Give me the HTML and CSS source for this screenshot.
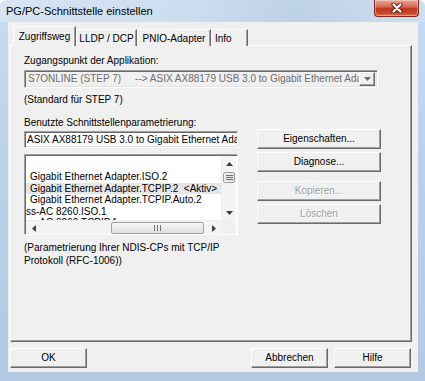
FILE: index.html
```html
<!DOCTYPE html>
<html lang="de">
<head>
<meta charset="utf-8">
<title>PG/PC-Schnittstelle einstellen</title>
<link rel="stylesheet" href="styles.css">
</head>
<body>
<div class="window">
  <div class="titlebar">
    <span class="title">PG/PC-Schnittstelle einstellen</span>
    <div class="close">
      <svg width="14" height="10" viewBox="0 0 14 10"><path d="M3.5 1.5 L10.5 8.5 M10.5 1.5 L3.5 8.5" stroke="#5a2016" stroke-width="4.2" stroke-linecap="round"/><path d="M3.5 1.5 L10.5 8.5 M10.5 1.5 L3.5 8.5" stroke="#ffffff" stroke-width="2.2" stroke-linecap="round"/></svg>
    </div>
  </div>
  <div class="client">
    <div class="tabs">
      <div class="tab active t1">Zugriffsweg</div>
      <div class="tab t2">LLDP / DCP</div>
      <div class="tab t3">PNIO-Adapter</div>
      <div class="tab t4">Info</div>
    </div>
    <div class="panel">
      <div class="label">Zugangspunkt der Applikation:</div>
      <div class="combo">
        <span class="combo-text">S7ONLINE (STEP 7)     --&gt; ASIX AX88179 USB 3.0 to Gigabit Ethernet Adapter</span>
        <span class="combo-btn"><svg width="7" height="4" viewBox="0 0 7 4"><path d="M0 0 H7 L3.5 4 Z" fill="#6d6d6d"/></svg></span>
      </div>
      <div class="label gap-std">(Standard für STEP 7)</div>
      <div class="label gap-ben">Benutzte Schnittstellenparametrierung:</div>
      <div class="cols">
        <div class="leftcol">
          <div class="textbox">ASIX AX88179 USB 3.0 to Gigabit Ethernet Adapter</div>
          <div class="list">
            <div class="items">
              <div class="row ind">Gigabit Ethernet Adapter.ISO.2</div>
              <div class="row ind sel">Gigabit Ethernet Adapter.TCPIP.2&nbsp;&nbsp;&lt;Aktiv&gt;</div>
              <div class="row ind">Gigabit Ethernet Adapter.TCPIP.Auto.2</div>
              <div class="row">ss-AC 8260.ISO.1</div>
              <div class="row">ss-AC 8260.TCPIP.1</div>
            </div>
            <div class="vscroll">
              <span class="sbtn"><svg width="7" height="4" viewBox="0 0 7 4"><path d="M0 4 H7 L3.5 0 Z" fill="#404040"/></svg></span>
              <span class="vthumb"><span class="grip"></span><span class="grip"></span><span class="grip"></span></span>
              <span class="vtrack"></span>
              <span class="sbtn"><svg width="7" height="4" viewBox="0 0 7 4"><path d="M0 0 H7 L3.5 4 Z" fill="#404040"/></svg></span>
            </div>
            <div class="hscroll">
              <span class="sbtn"><svg width="4" height="7" viewBox="0 0 4 7"><path d="M4 0 V7 L0 3.5 Z" fill="#404040"/></svg></span>
              <span class="htrack"><span class="hthumb"><span class="vgrip"></span><span class="vgrip"></span><span class="vgrip"></span></span></span>
              <span class="sbtn"><svg width="4" height="7" viewBox="0 0 4 7"><path d="M0 0 V7 L4 3.5 Z" fill="#404040"/></svg></span>
            </div>
            <div class="corner"></div>
          </div>
        </div>
        <div class="rightcol">
          <div class="btn wide">Eigenschaften...</div>
          <div class="btn wide g3">Diagnose...</div>
          <div class="btn wide disabled g9">Kopieren...</div>
          <div class="btn wide disabled g3">Löschen</div>
        </div>
      </div>
      <div class="note">(Parametrierung Ihrer NDIS-CPs mit TCP/IP<br>Protokoll (RFC-1006))</div>
    </div>
    <div class="footer">
      <div class="btn foot">OK</div>
      <div class="btn foot push">Abbrechen</div>
      <div class="btn foot">Hilfe</div>
    </div>
  </div>
</div>
</body>
</html>
```

FILE: styles.css
```css
* { box-sizing: border-box; }
html, body { margin: 0; padding: 0; background: #ffffff; }
body { font-family: "Liberation Sans", Arial, sans-serif; font-size: 10px; color: #000; }

.window {
  width: 425px;
  height: 381px;
  display: flex;
  flex-direction: column;
  background: linear-gradient(180deg, #cadcf0 0%, #bcd1ea 40%, #b3c9e3 100%);
  border-radius: 6px 6px 0 0;
}

.titlebar {
  height: 22px;
  flex: none;
  display: flex;
  align-items: flex-start;
  background: linear-gradient(90deg, rgba(255,255,255,0.25) 0%, rgba(255,255,255,0.05) 45%, rgba(120,150,185,0.15) 70%, rgba(255,255,255,0.1) 100%);
}
.title {
  padding: 4px 0 0 6px;
  font-size: 11px;
  line-height: 14px;
  color: #000;
}
.close {
  margin-left: auto;
  margin-right: 6px;
  width: 45px;
  height: 17px;
  border: 1px solid #7a2c22;
  border-top: none;
  border-radius: 0 0 4px 4px;
  background: linear-gradient(180deg, #e8a596 0%, #d96d55 40%, #c2341a 55%, #c94a2c 85%, #dc7a58 100%);
  display: flex;
  justify-content: center;
  align-items: center;
  box-shadow: inset 0 0 0 1px rgba(255,255,255,0.35);
}

.client {
  flex: 1;
  margin: 0 7px 9px 8px;
  background: #f0f0f0;
  display: flex;
  flex-direction: column;
}

.tabs {
  display: flex;
  align-items: flex-end;
  height: 20px;
  margin: 4px 0 -1px 5px;
  position: relative;
  z-index: 1;
}
.tab {
  height: 17px;
  line-height: 12px;
  padding-top: 3px;
  text-align: center;
  border-top: 1px solid #ffffff;
  border-left: 1px solid #ffffff;
  border-right: 1px solid #696969;
  box-shadow: inset -1px 0 0 #a0a0a0;
  background: #f0f0f0;
  white-space: nowrap;
}
.tab.active { height: 20px; padding-top: 4px; }
.t1 { width: 63px; }
.t2 { width: 61px; }
.t3 { width: 74px; }
.t4 { width: 37px; text-align: left; padding-left: 3px; }

.panel {
  margin-left: 2px;
  width: 402px;
  height: 297px;
  background: #f0f0f0;
  border-top: 1px solid #ffffff;
  border-left: 1px solid #ffffff;
  border-right: 1px solid #696969;
  border-bottom: 1px solid #696969;
  box-shadow: inset -1px -1px 0 #a0a0a0;
  padding: 9px 0 0 13px;
  display: flex;
  flex-direction: column;
}

.label { line-height: 12px; height: 12px; white-space: nowrap; }
.gap-std { margin-top: 6px; }
.gap-ben { margin-top: 11px; }

.combo {
  margin-top: 3px;
  width: 354px;
  height: 18px;
  border: 1px solid;
  border-color: #a0a0a0 #ffffff #ffffff #a0a0a0;
  box-shadow: inset 1px 1px 0 #696969, inset -1px -1px 0 #e3e3e3;
  background: #f0f0f0;
  display: flex;
  align-items: center;
  padding: 0 2px 0 3px;
  overflow: hidden;
}
.combo-text {
  flex: 1;
  white-space: pre;
  overflow: hidden;
  color: #6d6d6d;
  line-height: 12px;
}
.combo-btn {
  flex: none;
  width: 16px;
  height: 14px;
  display: flex;
  align-items: center;
  justify-content: center;
  border: 1px solid;
  border-color: #ffffff #696969 #696969 #ffffff;
  box-shadow: inset -1px -1px 0 #a0a0a0;
  background: #f0f0f0;
}

.cols {
  display: flex;
  gap: 19px;
}
.leftcol { width: 214px; display: flex; flex-direction: column; }
.rightcol { width: 124px; display: flex; flex-direction: column; }

.textbox {
  margin-top: 2px;
  height: 17px;
  background: #ffffff;
  border: 1px solid;
  border-color: #a0a0a0 #ffffff #ffffff #a0a0a0;
  box-shadow: inset 1px 1px 0 #696969, inset -1px -1px 0 #e3e3e3;
  padding: 2px 0 0 2px;
  line-height: 12px;
  white-space: nowrap;
  overflow: hidden;
}

.list {
  margin-top: 6px;
  height: 81px;
  background: #ffffff;
  border: 1px solid;
  border-color: #a0a0a0 #ffffff #ffffff #a0a0a0;
  box-shadow: inset 1px 1px 0 #696969;
  padding: 1px 1px 0 1px;
  display: grid;
  grid-template-columns: 1fr 15px;
  grid-template-rows: 1fr 14px;
  overflow: hidden;
}
.items {
  overflow: hidden;
  padding-top: 15px;
}
.row {
  height: 11.5px;
  line-height: 11.5px;
  white-space: nowrap;
  overflow: hidden;
}
.row.ind { padding-left: 4px; }
.row.sel { background: #e6e6e6; }

.vscroll {
  display: flex;
  flex-direction: column;
  background: #f4f4f4;
  border-left: 1px solid #ececec;
}
.sbtn {
  flex: none;
  width: 15px;
  height: 15px;
  display: flex;
  align-items: center;
  justify-content: center;
}
.hscroll .sbtn { width: 15px; height: 14px; }
.vthumb {
  margin: 1px 1px 0 1px;
  height: 11px;
  border: 1px solid #a0a0a0;
  border-radius: 2px;
  background: linear-gradient(90deg, #f4f4f4, #e0e0e0);
  display: flex;
  flex-direction: column;
  justify-content: center;
  align-items: center;
  gap: 1px;
}
.grip { width: 7px; height: 1px; background: #707070; }
.vtrack { flex: 1; }

.hscroll {
  display: flex;
  background: #f4f4f4;
  border-top: 1px solid #ececec;
}
.htrack { flex: 1; display: flex; align-items: center; }
.hthumb {
  margin-left: 70px;
  width: 93px;
  height: 12px;
  border: 1px solid #a0a0a0;
  border-radius: 2px;
  background: linear-gradient(180deg, #f6f6f6, #e0e0e0);
  display: flex;
  justify-content: center;
  align-items: center;
  gap: 2px;
}
.vgrip { width: 1px; height: 6px; background: #707070; }
.corner { background: #f0f0f0; }

.btn {
  height: 20px;
  display: flex;
  align-items: center;
  justify-content: center;
  background: #f0f0f0;
  border: 1px solid;
  border-color: #ffffff #696969 #696969 #ffffff;
  box-shadow: inset -1px -1px 0 #a0a0a0;
  white-space: nowrap;
  line-height: 12px;
}
.btn.disabled { color: #a0a0a0; text-shadow: 1px 1px 0 #ffffff; }
.g3 { margin-top: 3px; }
.g9 { margin-top: 9px; }

.note {
  margin-top: 6px;
  line-height: 13px;
}

.footer {
  display: flex;
  gap: 6px;
  margin: 6px 7px 0 2px;
}
.btn.foot { width: 77px; }
.push { margin-left: auto; }
```
